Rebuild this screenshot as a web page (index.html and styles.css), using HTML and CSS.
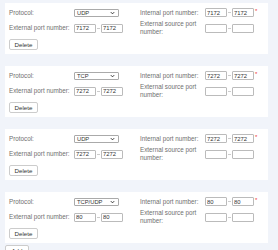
FILE: index.html
```html
<!DOCTYPE html>
<html lang="en">
<head>
    <meta charset="UTF-8">
    <meta name="viewport" content="width=device-width, initial-scale=1.0">
    <title>Port Forwarding</title>
    <link rel="stylesheet" href="styles.css">
</head>
<body>

    <div class="rule-list">

        <div class="rule">
            <div class="fields">
                <div class="field">
                    <label>Protocol:</label>
                    <div class="select-box">
                        <span class="select-value">UDP</span>
                        <svg class="arrow" viewBox="0 0 6 4"><path d="M1 1 L3 3 L5 1" /></svg>
                    </div>
                </div>
                <div class="field">
                    <label>Internal port number:</label>
                    <div class="range">
                        <input type="text" value="7172"><span class="dash"></span><input type="text" value="7172"><span class="req">*</span>
                    </div>
                </div>
                <div class="field">
                    <label>External port number:</label>
                    <div class="range">
                        <input type="text" value="7172"><span class="dash"></span><input type="text" value="7172">
                    </div>
                </div>
                <div class="field">
                    <label>External source port number:</label>
                    <div class="range">
                        <input type="text"><span class="dash"></span><input type="text">
                    </div>
                </div>
            </div>
            <button class="btn">Delete</button>
        </div>

        <div class="rule">
            <div class="fields">
                <div class="field">
                    <label>Protocol:</label>
                    <div class="select-box">
                        <span class="select-value">TCP</span>
                        <svg class="arrow" viewBox="0 0 6 4"><path d="M1 1 L3 3 L5 1" /></svg>
                    </div>
                </div>
                <div class="field">
                    <label>Internal port number:</label>
                    <div class="range">
                        <input type="text" value="7272"><span class="dash"></span><input type="text" value="7272"><span class="req">*</span>
                    </div>
                </div>
                <div class="field">
                    <label>External port number:</label>
                    <div class="range">
                        <input type="text" value="7272"><span class="dash"></span><input type="text" value="7272">
                    </div>
                </div>
                <div class="field">
                    <label>External source port number:</label>
                    <div class="range">
                        <input type="text"><span class="dash"></span><input type="text">
                    </div>
                </div>
            </div>
            <button class="btn">Delete</button>
        </div>

        <div class="rule">
            <div class="fields">
                <div class="field">
                    <label>Protocol:</label>
                    <div class="select-box">
                        <span class="select-value">UDP</span>
                        <svg class="arrow" viewBox="0 0 6 4"><path d="M1 1 L3 3 L5 1" /></svg>
                    </div>
                </div>
                <div class="field">
                    <label>Internal port number:</label>
                    <div class="range">
                        <input type="text" value="7272"><span class="dash"></span><input type="text" value="7272"><span class="req">*</span>
                    </div>
                </div>
                <div class="field">
                    <label>External port number:</label>
                    <div class="range">
                        <input type="text" value="7272"><span class="dash"></span><input type="text" value="7272">
                    </div>
                </div>
                <div class="field">
                    <label>External source port number:</label>
                    <div class="range">
                        <input type="text"><span class="dash"></span><input type="text">
                    </div>
                </div>
            </div>
            <button class="btn">Delete</button>
        </div>

        <div class="rule">
            <div class="fields">
                <div class="field">
                    <label>Protocol:</label>
                    <div class="select-box">
                        <span class="select-value">TCP/UDP</span>
                        <svg class="arrow" viewBox="0 0 6 4"><path d="M1 1 L3 3 L5 1" /></svg>
                    </div>
                </div>
                <div class="field">
                    <label>Internal port number:</label>
                    <div class="range">
                        <input type="text" value="80"><span class="dash"></span><input type="text" value="80"><span class="req">*</span>
                    </div>
                </div>
                <div class="field">
                    <label>External port number:</label>
                    <div class="range">
                        <input type="text" value="80"><span class="dash"></span><input type="text" value="80">
                    </div>
                </div>
                <div class="field">
                    <label>External source port number:</label>
                    <div class="range">
                        <input type="text"><span class="dash"></span><input type="text">
                    </div>
                </div>
            </div>
            <button class="btn">Delete</button>
        </div>

        <button class="btn add-btn">Add</button>
    </div>

</body>
</html>
```

FILE: styles.css
```css
* {
    margin: 0;
    padding: 0;
    box-sizing: border-box;
    font-family: 'Liberation Sans', Arial, sans-serif;
}

body {
    background: #f1f4fa;
    overflow: hidden;
}

.rule-list {
    padding: 3px 0 0 5px;
}

.rule {
    width: 263px;
    background: #fff;
    padding: 5px 4px 4px;
    margin-bottom: 12px;
}

.fields {
    display: grid;
    grid-template-columns: 131px 1fr;
    row-gap: 3px;
    align-items: center;
}

.field {
    display: flex;
    align-items: center;
}

.field label {
    width: 65px;
    flex-shrink: 0;
    padding-right: 3px;
    font-size: 6.3px;
    line-height: 8px;
    color: #6f6f6f;
}

.select-box {
    position: relative;
    display: flex;
    align-items: center;
    width: 45px;
    height: 8px;
    border: 1px solid #aaa;
    border-radius: 1px;
    background: #fff;
    padding: 0 2px;
}

.select-value {
    font-size: 5.8px;
    line-height: 6px;
    color: #333;
}

.select-box .arrow {
    position: absolute;
    right: 3px;
    top: 1px;
    width: 5px;
    height: 4px;
    fill: none;
    stroke: #333;
    stroke-width: 1.2;
}

.range {
    display: flex;
    align-items: center;
}

.range input {
    width: 22px;
    height: 9px;
    border: 1px solid #bbb;
    border-radius: 1px;
    padding: 0 1px;
    font-size: 5.9px;
    line-height: 7px;
    color: #333;
    background: #fff;
    outline: none;
}

.dash {
    width: 5px;
    height: 1px;
    padding: 0 1px;
    background: #ccc;
    background-clip: content-box;
}

.req {
    align-self: flex-start;
    margin-left: 1px;
    font-size: 6px;
    line-height: 6px;
    color: #e33;
}

.btn {
    display: block;
    margin-top: 3px;
    width: 29px;
    height: 11px;
    border: 1px solid #ccc;
    border-radius: 2px;
    background: #fff;
    font-size: 6.2px;
    color: #333;
    cursor: pointer;
}

.add-btn {
    margin-top: -10px;
    width: 24px;
}
```
